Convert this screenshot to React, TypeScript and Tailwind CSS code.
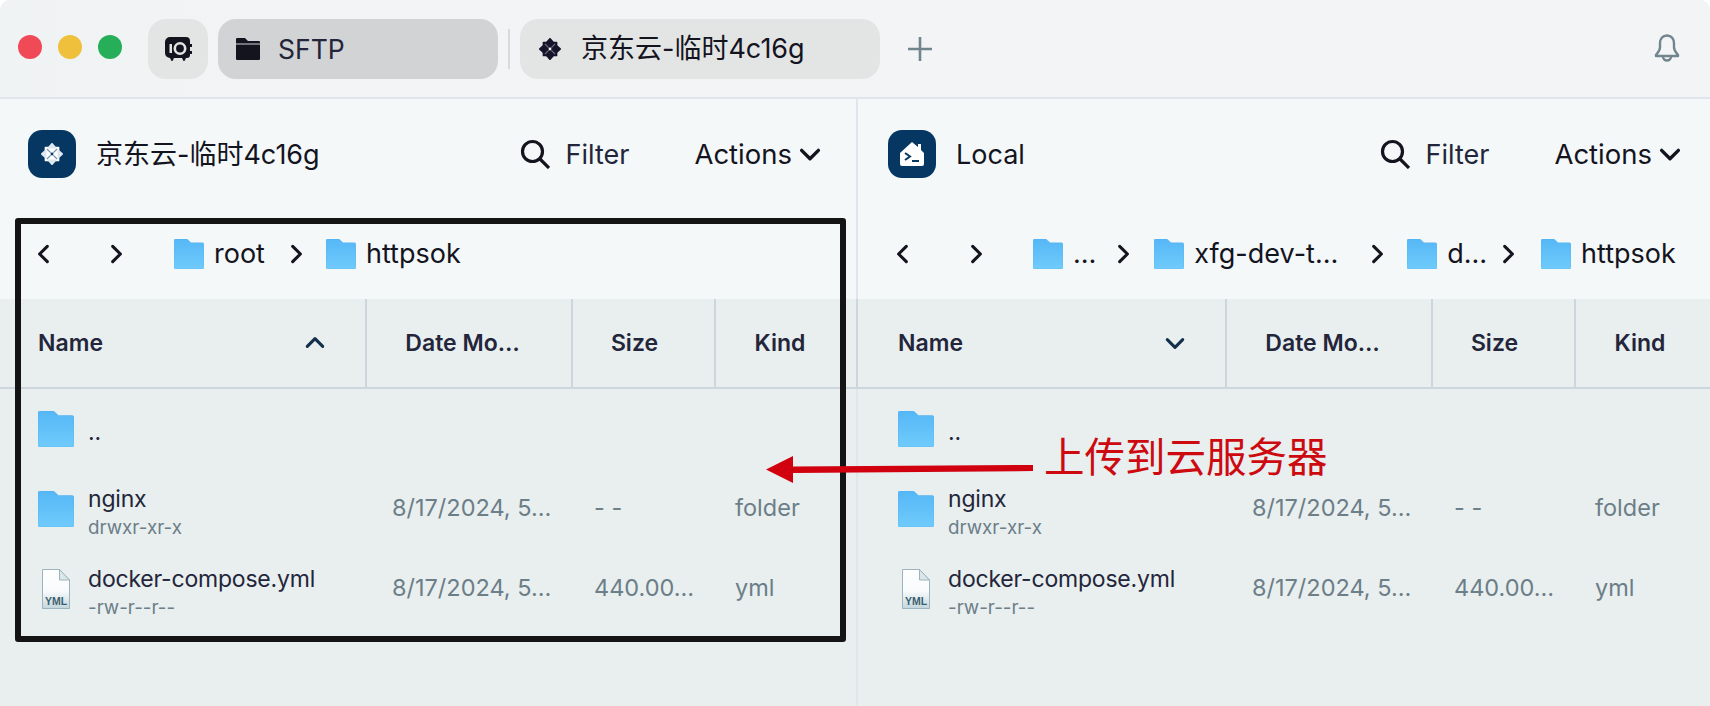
import React from "react";

const FONT = "font-['Inter','Noto_Sans_CJK_SC',sans-serif]";

function Folder({ size, id }: { size: number; id: string }) {
  return (
    <svg width={size} height={size} viewBox="0 0 36 36" className="shrink-0">
      <defs>
        <linearGradient id={id} x1="0" y1="0" x2="0" y2="1">
          <stop offset="0" stopColor="#55b7f6" />
          <stop offset="1" stopColor="#70cbfb" />
        </linearGradient>
      </defs>
      <path
        d="M0 2a2 2 0 0 1 2-2h13.5l5 4.500H34a2 2 0 0 1 2 2V34a2 2 0 0 1-2 2H2a2 2 0 0 1-2-2z"
        fill={`url(#${id})`}
        stroke="#4fb0ee"
        strokeWidth="0.5"
      />
    </svg>
  );
}

function YmlFile({ id }: { id: string }) {
  return (
    <svg width="28" height="40" viewBox="0 0 28 40" className="shrink-0">
      <defs>
        <linearGradient id={id} x1="0" y1="0" x2="0" y2="1">
          <stop offset="0" stopColor="#ffffff" />
          <stop offset="0.55" stopColor="#f8fbfc" />
          <stop offset="1" stopColor="#c3d6dd" />
        </linearGradient>
      </defs>
      <path d="M0.5 0.5H17.5L27.5 11V39.5H0.5Z" fill={`url(#${id})`} stroke="#9db4be" strokeWidth="1" />
      <path d="M17.5 0.5V11H27.5Z" fill="#dbe6ea" stroke="#9db4be" strokeWidth="1" />
      <text x="14" y="36" textAnchor="middle" fontFamily="'Liberation Sans',sans-serif" fontWeight="700" fontSize="10.5" fill="#3d5f6e">
        YML
      </text>
    </svg>
  );
}

function Flower({ size, dark }: { size: number; dark?: boolean }) {
  const petal = dark ? "#14142a" : "#dfe7f0";
  const square = dark ? "#14142a" : "#ffffff";
  const center = dark ? "#f0f1f2" : "#0a3763";
  const hatch = dark ? "#6c6c7c" : "#6f8fb0";
  return (
    <svg width={size} height={size} viewBox="0 0 24 24">
      <rect x="4" y="4" width="16" height="16" rx="1" fill={square} />
      <path
        d="M8.500 5L12 1l3.500 4zM8.500 19L12 23l3.500-4zM5 8.500L1 12l4 3.500zM19 8.500L23 12l-4 3.500z"
        fill={petal}
        stroke={petal}
        strokeWidth="2"
        strokeLinejoin="round"
      />
      <path d="M6.500 6.500l4 4M17.500 6.500l-4 4M6.500 17.500l4-4M17.500 17.500l-4-4" stroke={hatch} strokeWidth="1.300" />
      <circle cx="12" cy="12" r="1.600" fill={center} />
    </svg>
  );
}

function Chevron({ dir, size = 20, className = "" }: { dir: "l" | "r" | "u" | "d"; size?: number; className?: string }) {
  const d = {
    l: "M13 3L6 10l7 7",
    r: "M7 3l7 7-7 7",
    u: "M3 13l7-7 7 7",
    d: "M3 7l7 7 7-7",
  }[dir];
  return (
    <svg width={size} height={size} viewBox="0 0 20 20" fill="none" stroke="currentColor" strokeWidth="2.8" strokeLinecap="round" strokeLinejoin="round" className={className}>
      <path d={d} />
    </svg>
  );
}

function Search() {
  return (
    <svg width="30" height="30" viewBox="0 0 30 30" fill="none" stroke="#14141f" strokeWidth="3.2">
      <circle cx="12.5" cy="12.5" r="10" />
      <path d="M19.5 19.5L29 29" />
    </svg>
  );
}

type Row = { name: string; sub?: string; date?: string; size?: string; kind?: string; file?: boolean };

const rows: Row[] = [
  { name: ".." },
  { name: "nginx", sub: "drwxr-xr-x", date: "8/17/2024, 5…", size: "- -", kind: "folder" },
  { name: "docker-compose.yml", sub: "-rw-r--r--", date: "8/17/2024, 5…", size: "440.00…", kind: "yml", file: true },
];

function Panel({
  side,
  icon,
  title,
  sortDir,
  crumbs,
  crumbPad,
}: {
  side: string;
  icon: React.ReactNode;
  title: string;
  sortDir: "u" | "d";
  crumbs: React.ReactNode;
  crumbPad: string;
}) {
  return (
    <div className="flex flex-col w-[856px] shrink-0 h-full">
      <div className="h-[110px] flex items-center pl-[28px] pr-[34px] bg-[#f4f8f9]">
        <div className="w-[48px] h-[48px] rounded-[14px] bg-[#063763] flex items-center justify-center shrink-0">{icon}</div>
        <div className="ml-[20px] pt-[2px] text-[27px] text-[#14141f] whitespace-nowrap">{title}</div>
        <div className="flex-1" />
        <div className="flex items-center gap-[16px]">
          <Search />
          <span className="pt-[2px] text-[27px] text-[#23263a]">Filter</span>
        </div>
        <div className="flex items-center gap-[6px] ml-[65px]">
          <span className="pt-[2px] text-[27.5px] text-[#14141f]">Actions</span>
          <Chevron dir="d" size={24} className="text-[#14141f]" />
        </div>
      </div>
      <div className={`h-[90px] flex items-center ${crumbPad} bg-[#f4f8f9] text-[27px] text-[#14141f]`}>{crumbs}</div>
      <div className="flex-1 flex flex-col bg-[#e9eeef]">
        <div className="h-[90px] shrink-0 flex border-b-2 border-[#ccd6dc] text-[23px] font-semibold text-[#23263a]">
          <div className="w-[367px] flex items-center justify-between pl-[38px] pr-[39px] border-r-2 border-[#ccd6dc]">
            <span>Name</span>
            <Chevron dir={sortDir} size={22} className="text-[#12304a]" />
          </div>
          <div className="w-[206px] flex items-center justify-center pr-[13px] border-r-2 border-[#ccd6dc] whitespace-nowrap">Date Mo…</div>
          <div className="w-[143px] flex items-center justify-center pr-[18px] border-r-2 border-[#ccd6dc]">Size</div>
          <div className="flex-1 flex items-center justify-center pr-[12px]">Kind</div>
        </div>
        {rows.map((r, i) => (
          <div key={r.name} className="h-[80px] flex items-center">
            <div className="w-[392px] flex items-center pl-[38px] shrink-0">
              <div className="w-[36px] flex justify-center shrink-0">
                {r.file ? <YmlFile id={`${side}y${i}`} /> : <Folder size={36} id={`${side}f${i}`} />}
              </div>
              <div className="ml-[14px] pt-[6px] flex flex-col">
                <span className="text-[23px] leading-[31px] tracking-[-0.2px] text-[#23263a]">{r.name}</span>
                {r.sub && <span className="text-[18.8px] leading-[26px] text-[#6c7e88]">{r.sub}</span>}
              </div>
            </div>
            <div className="w-[202px] -mt-[2px] text-[23.5px] text-[#6c7e88] shrink-0 whitespace-nowrap">{r.date}</div>
            <div className="w-[141px] -mt-[2px] text-[23.5px] text-[#6c7e88] shrink-0 whitespace-nowrap">{r.size}</div>
            <div className="-mt-[2px] text-[23.5px] text-[#6c7e88]">{r.kind}</div>
          </div>
        ))}
      </div>
    </div>
  );
}

function Crumb({ id, label, cls = "" }: { id: string; label: string; cls?: string }) {
  return (
    <div className={`flex items-center ${cls}`}>
      <Folder size={30} id={id} />
      <span className="ml-[10px] whitespace-nowrap">{label}</span>
    </div>
  );
}

export default function App() {
  return (
    <div className={`relative w-[1710px] h-[706px] overflow-hidden rounded-t-[10px] bg-[#f3f4f6] ${FONT}`}>
      <div className="h-[99px] flex items-center border-b-2 border-[#e1e6ee] pl-[18px] pr-[30px] bg-gradient-to-r from-[#f0f3f4] to-[#f3f4f6] to-[30%]">
        <div className="flex gap-[16px] mb-[3px]">
          <div className="w-[24px] h-[24px] rounded-full bg-[#f04a56]" />
          <div className="w-[24px] h-[24px] rounded-full bg-[#eec03c]" />
          <div className="w-[24px] h-[24px] rounded-full bg-[#27ae58]" />
        </div>
        <div className="ml-[26px] w-[60px] h-[60px] rounded-[18px] bg-[#e3e5e5] flex items-center justify-center">
          <svg width="28" height="26" viewBox="0 0 28 26">
            <path
              d="M6 1h16a4 4 0 0 1 4 4v3h2v3h-2v4h2v3h-2v1a3 3 0 0 1-3 3h-1l-1 2a1 1 0 0 1-2 0l-1-2H10l-1 2a1 1 0 0 1-2 0l-1-2a5 5 0 0 1-5-5V6a5 5 0 0 1 5-5z"
              fill="#14141f"
            />
            <rect x="5.5" y="8" width="2.5" height="9" rx="0.5" fill="#e3e5e5" />
            <circle cx="16" cy="12.5" r="5.2" fill="none" stroke="#e3e5e5" strokeWidth="2.6" />
          </svg>
        </div>
        <div className="ml-[10px] w-[280px] h-[60px] rounded-[18px] bg-[#d2d3d5] flex items-center pl-[18px]">
          <svg width="24" height="22" viewBox="0 0 24 22">
            <path d="M0 1a1 1 0 0 1 1-1h8l3 3h11a1 1 0 0 1 1 1v17a1 1 0 0 1-1 1H1a1 1 0 0 1-1-1z" fill="#14141f" />
            <path d="M0 6h24" stroke="#d2d3d5" strokeWidth="1" />
          </svg>
          <span className="ml-[18px] pt-[2px] text-[26.5px] text-[#23263a]">SFTP</span>
        </div>
        <div className="ml-[10px] w-[2px] h-[40px] bg-[#d8dadb]" />
        <div className="ml-[10px] w-[360px] h-[60px] rounded-[18px] bg-[#e3e5e5] flex items-center pl-[19px]">
          <Flower size={22} dark />
          <span className="ml-[20px] pt-[2px] text-[27px] text-[#14141f] whitespace-nowrap">京东云-临时4c16g</span>
        </div>
        <svg width="24" height="24" viewBox="0 0 24 24" className="ml-[28px]" stroke="#71858f" strokeWidth="2.6">
          <path d="M12 0v24M0 12h24" />
        </svg>
        <div className="flex-1" />
        <svg width="26" height="28" viewBox="0 0 26 28" fill="none" stroke="#71858f" strokeWidth="2.4" strokeLinejoin="round" className="mb-[2px]">
          <path d="M13 1.500c-4.500 0-7 3.500-7 8v4c0 3-2 5-4 7.500v1h22v-1c-2-2.500-4-4.500-4-7.500v-4c0-4.500-2.500-8-7-8z" />
          <path d="M9 22.500a4 4 0 0 0 8 0" />
        </svg>
      </div>

      <div className="flex h-[607px]">
        <Panel
          side="l"
          icon={<Flower size={22} />}
          title="京东云-临时4c16g"
          sortDir="u"
          crumbPad="pl-[33px]"
          crumbs={
            <>
              <Chevron dir="l" size={22} />
              <Chevron dir="r" size={22} className="ml-[50px]" />
              <Crumb id="cl1" label="root" cls="ml-[47px]" />
              <Chevron dir="r" size={22} className="ml-[20px]" />
              <Crumb id="cl2" label="httpsok" cls="ml-[19px]" />
            </>
          }
        />
        <div className="w-[4px] shrink-0 flex flex-col">
          <div className="h-[200px] border-l-2 border-[#e1e6ee] bg-[#f4f8f9]" />
          <div className="h-[90px] border-l-2 border-b-2 border-[#ccd6dc] bg-[#e9eeef]" />
          <div className="flex-1 border-l-2 border-[#e1e7e9] bg-[#e9eeef]" />
        </div>
        <Panel
          side="r"
          icon={
            <svg width="26" height="26" viewBox="0 0 26 26">
              <path d="M13 1l6 5V3h3v6l3 3v11a2 2 0 0 1-2 2H3a2 2 0 0 1-2-2V12z" fill="#fff" />
              <path d="M6 12l5 3.500-5 3.500" fill="none" stroke="#063763" strokeWidth="2" />
              <path d="M13 20h7" stroke="#063763" strokeWidth="2" />
            </svg>
          }
          title="Local"
          sortDir="d"
          crumbPad="pl-[32px]"
          crumbs={
            <>
              <Chevron dir="l" size={22} />
              <Chevron dir="r" size={22} className="ml-[51px]" />
              <Crumb id="cr1" label="…" cls="ml-[46px]" />
              <Chevron dir="r" size={22} className="ml-[16px]" />
              <Crumb id="cr2" label="xfg-dev-t…" cls="ml-[20px]" />
              <Chevron dir="r" size={22} className="ml-[28px]" />
              <Crumb id="cr3" label="d…" cls="ml-[19px]" />
              <Chevron dir="r" size={22} className="ml-[10px]" />
              <Crumb id="cr4" label="httpsok" cls="ml-[22px]" />
            </>
          }
        />
      </div>

      <div className="absolute left-[15px] top-[218px] w-[831px] h-[424px] border-[6px] border-[#141414] rounded-[3px] pointer-events-none" />
      <svg className="absolute left-[760px] top-[449px]" width="280" height="36" viewBox="0 0 280 36">
        <path d="M6 20.500L33 7v10.500l240-1.500v6l-240 2v10z" fill="#d0000f" />
      </svg>
      <div className="absolute left-[1044px] top-[431px] text-[40.5px] leading-[48px] text-[#cc0a10] font-['Noto_Sans_CJK_SC',sans-serif] whitespace-nowrap">
        上传到云服务器
      </div>
    </div>
  );
}
